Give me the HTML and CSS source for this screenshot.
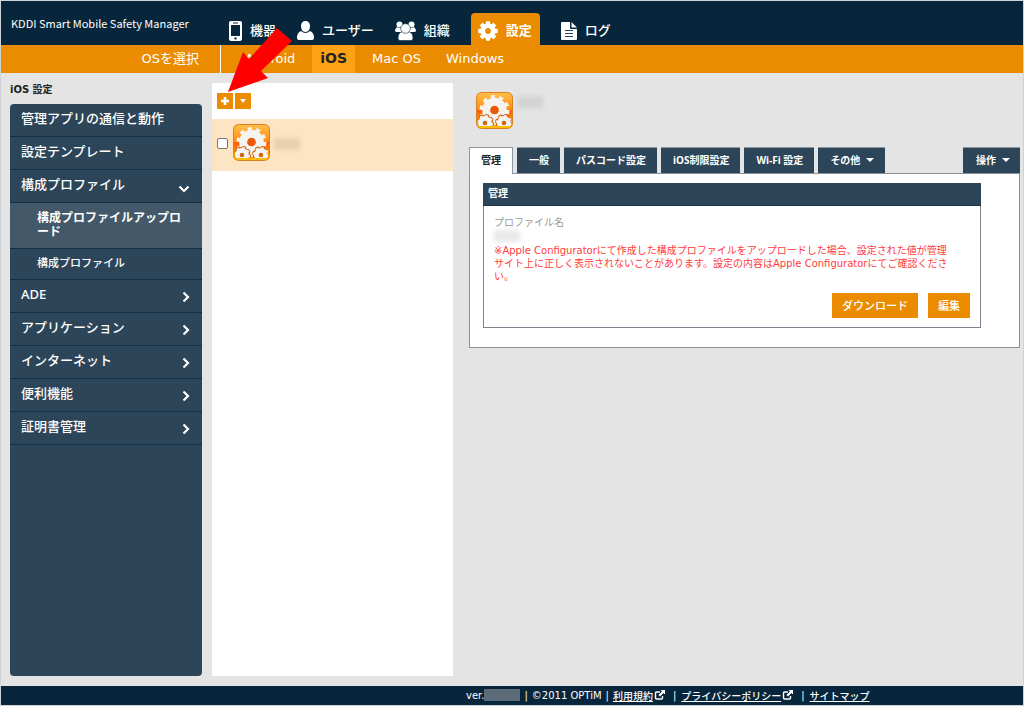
FILE: index.html
```
<!DOCTYPE html>
<html lang="ja">
<head>
<meta charset="utf-8">
<meta name="viewport" content="width=device-width, initial-scale=1">
<title>KDDI Smart Mobile Safety Manager</title>
<link rel="stylesheet" href="styles.css">
</head>
<body>
<svg class="defs" aria-hidden="true">
  <defs>
    <linearGradient id="tile" x1="0" y1="0" x2="0" y2="1">
      <stop offset="0" stop-color="#ffc04a"/>
      <stop offset="0.48" stop-color="#ff8a14"/>
      <stop offset="0.5" stop-color="#fb5a08"/>
      <stop offset="0.72" stop-color="#ff8a00"/>
      <stop offset="1" stop-color="#ffc400"/>
    </linearGradient>
    <clipPath id="tile-clip"><path d="M2 2h33v32H2z"/></clipPath>
    <symbol id="gear" viewBox="-10 -10 20 20">
      <circle r="5.2" fill="none" stroke="currentColor" stroke-width="4.6"/>
      <g fill="currentColor">
        <path id="tooth" d="M-2.4-6.5l.5-3.3h3.8l.5 3.3z"/>
        <use href="#tooth" transform="rotate(45)"/>
        <use href="#tooth" transform="rotate(90)"/>
        <use href="#tooth" transform="rotate(135)"/>
        <use href="#tooth" transform="rotate(180)"/>
        <use href="#tooth" transform="rotate(225)"/>
        <use href="#tooth" transform="rotate(270)"/>
        <use href="#tooth" transform="rotate(315)"/>
      </g>
    </symbol>
    <symbol id="profile" viewBox="0 0 37 37">
      <rect x=".5" y=".5" width="36" height="36" rx="5" fill="url(#tile)" stroke="#d98022"/>
      <g clip-path="url(#tile-clip)">
        <g fill="none" stroke="#f5f3f0">
          <circle cx="18.500" cy="18" r="8.300" stroke-width="8"/>
          <circle cx="18.500" cy="18" r="13" stroke-width="4" stroke-dasharray="4.080 4.090"/>
        </g>
        <circle cx="18.500" cy="18" r="4" fill="#e8590c"/>
        <g fill="#cf6712" stroke="#cf6712">
          <circle cx="9" cy="31" r="7"/>
          <circle cx="9" cy="31" r="8" stroke-width="2" stroke-dasharray="3.800 2.480"/>
          <circle cx="28" cy="31" r="7"/>
          <circle cx="28" cy="31" r="8" stroke-width="2" stroke-dasharray="3.800 2.480"/>
        </g>
        <g fill="none" stroke="#f5f3f0">
          <circle cx="9" cy="31" r="4.600" stroke-width="4.600"/>
          <circle cx="9" cy="31" r="7.200" stroke-width="1.800" stroke-dasharray="2.700 2.950"/>
          <circle cx="28" cy="31" r="4.600" stroke-width="4.600"/>
          <circle cx="28" cy="31" r="7.200" stroke-width="1.800" stroke-dasharray="2.700 2.950"/>
        </g>
      </g>
    </symbol>
    <symbol id="chevron" viewBox="0 0 8 12">
      <path d="M1.500 1.500L6 6l-4.500 4.500" fill="none" stroke="currentColor" stroke-width="2.200"/>
    </symbol>
    <symbol id="external" viewBox="0 0 11 10">
      <path d="M6 2H2.500Q1.500 2 1.500 3v5q0 1 1 1h5q1 0 1-1V6" fill="none" stroke="currentColor" stroke-width="1.400"/>
      <path d="M6.500 0H11v4.500L9.500 3 6 6.500 4.500 5 8 1.500z" fill="currentColor"/>
    </symbol>
  </defs>
</svg>

<div class="app">
  <header class="topbar">
    <div class="brand">KDDI Smart Mobile Safety Manager</div>
    <nav class="topnav" aria-label="メイン">
      <a class="topnav-item" href="#">
        <svg class="icon-phone" viewBox="0 0 13 20"><path fill="#fff" fill-rule="evenodd" d="M2 0h9q2 0 2 2v16q0 2-2 2H2q-2 0-2-2V2q0-2 2-2zM2 4v11h9V4zM4 1.500v1h5v-1zM6.500 16.200a1.200 1.200 0 1 0 .01 0z"/></svg>
        機器
      </a>
      <a class="topnav-item" href="#">
        <svg class="icon-user" viewBox="0 0 17 20"><path fill="#fff" d="M8.500 0C11.500 0 13 2 13 5s-1.500 6-4.500 6S4 8 4 5s1.500-5 4.500-5zM4 10q4.500 4 9 0 4 1.500 4 7 0 2-2 2H2q-2 0-2-2 0-5.500 4-7z"/></svg>
        ユーザー
      </a>
      <a class="topnav-item" href="#">
        <svg class="icon-group" viewBox="0 0 21 20"><g fill="#fff"><circle cx="4.500" cy="3.500" r="3"/><circle cx="16.500" cy="3.500" r="3"/><path d="M2 6q3 2 5 0v5H2q-2 0-2-1.500T2 6zM19 6q-3 2-5 0v5h5q2 0 2-1.500T19 6z"/></g><g fill="#fff" stroke="#07263b" stroke-width=".6"><path d="M6 11h9q3 1.500 3 6 0 2.500-2 2.500H5q-2 0-2-2.500 0-4.500 3-6z"/><circle cx="10.500" cy="7.500" r="4.800"/></g></svg>
        組織
      </a>
      <a class="topnav-item topnav-item-active" href="#" aria-current="page">
        <svg class="icon-gear"><use href="#gear"/></svg>
        設定
      </a>
      <a class="topnav-item" href="#">
        <svg class="icon-log" viewBox="0 0 16 18"><path fill="#fff" d="M1 0h8v6q0 1 1 1h6v10q0 1-1 1H1q-1 0-1-1V1q0-1 1-1zM10.500 0L16 5.500h-5.500z"/><path stroke="#27455c" d="M4 8.500h8M4 11.500h8M4 14.500h8"/></svg>
        ログ
      </a>
    </nav>
  </header>

  <nav class="osbar" aria-label="OSを選択">
    <div class="osbar-label">OSを選択</div>
    <div class="osbar-links">
      <a class="os-link" href="#">Android</a>
      <a class="os-link os-link-active" href="#" aria-current="true">iOS</a>
      <a class="os-link" href="#">Mac OS</a>
      <a class="os-link" href="#">Windows</a>
    </div>
  </nav>

  <div class="workspace">
    <aside class="side">
      <h1 class="side-title">iOS 設定</h1>
      <nav class="menu" aria-label="iOS 設定">
        <a class="menu-item" href="#">管理アプリの通信と動作</a>
        <a class="menu-item" href="#">設定テンプレート</a>
        <a class="menu-item" href="#">構成プロファイル<svg class="chevron chevron-open" viewBox="0 0 12 8"><path d="M1.500 1.500L6 6l4.500-4.500" fill="none" stroke="currentColor" stroke-width="2.200"/></svg></a>
        <a class="menu-sub menu-sub-active" href="#">構成プロファイルアップロード</a>
        <a class="menu-sub" href="#">構成プロファイル</a>
        <a class="menu-item" href="#">ADE<svg class="chevron"><use href="#chevron"/></svg></a>
        <a class="menu-item" href="#">アプリケーション<svg class="chevron"><use href="#chevron"/></svg></a>
        <a class="menu-item" href="#">インターネット<svg class="chevron"><use href="#chevron"/></svg></a>
        <a class="menu-item" href="#">便利機能<svg class="chevron"><use href="#chevron"/></svg></a>
        <a class="menu-item" href="#">証明書管理<svg class="chevron"><use href="#chevron"/></svg></a>
      </nav>
    </aside>

    <section class="list">
      <div class="list-tools">
        <button class="tool" type="button" aria-label="追加"><svg class="tool-icon" viewBox="0 0 8 8"><path fill="#fff" d="M2.700 0h2.600v2.700H8v2.600H5.300V8H2.700V5.300H0V2.700h2.700z"/></svg></button>
        <button class="tool" type="button" aria-label="メニュー"><svg class="tool-icon" viewBox="0 0 8 8"><path fill="#fff" d="M1 2h6L4 6z"/></svg></button>
      </div>
      <label class="list-row">
        <input class="list-check" type="checkbox" aria-label="プロファイルを選択">
        <svg class="profile-icon"><use href="#profile"/></svg>
        <span class="masked masked-row"></span>
      </label>
    </section>

    <main class="detail">
      <div class="detail-head">
        <svg class="profile-icon"><use href="#profile"/></svg>
        <span class="masked masked-title"></span>
      </div>
      <div class="tabs">
        <button class="tab tab-active" type="button">管理</button>
        <button class="tab" type="button">一般</button>
        <button class="tab" type="button">パスコード設定</button>
        <button class="tab" type="button">iOS制限設定</button>
        <button class="tab" type="button">Wi-Fi 設定</button>
        <button class="tab" type="button">その他<span class="caret"></span></button>
        <button class="tab tab-action" type="button">操作<span class="caret"></span></button>
      </div>
      <div class="panel">
        <section class="card">
          <h2 class="card-title">管理</h2>
          <div class="card-body">
            <div class="field-label">プロファイル名</div>
            <div class="masked masked-name"></div>
            <p class="notice">※Apple Configuratorにて作成した構成プロファイルをアップロードした場合、設定された値が管理<br>サイト上に正しく表示されないことがあります。設定の内容はApple Configuratorにてご確認くださ<br>い。</p>
            <div class="actions">
              <button class="action" type="button">ダウンロード</button>
              <button class="action" type="button">編集</button>
            </div>
          </div>
        </section>
      </div>
    </main>
  </div>

  <footer class="footer">
    <span>ver.</span><span class="masked-version"></span>
    <span class="bar">|</span><span>©2011 OPTiM</span><span class="bar">|</span>
    <a class="footer-link" href="#">利用規約</a><svg class="external"><use href="#external"/></svg>
    <span class="bar bar-wide">|</span>
    <a class="footer-link" href="#">プライバシーポリシー</a><svg class="external"><use href="#external"/></svg>
    <span class="bar bar-wide">|</span>
    <a class="footer-link" href="#">サイトマップ</a>
  </footer>

  <svg class="pointer" viewBox="0 0 64 64" aria-hidden="true"><path fill="#f00" d="M0 65L15 25l6 7L49 1l15 13-31 30 7 7z"/></svg>
</div>
</body>
</html>
```
FILE: styles.css
```
* {
  box-sizing: border-box;
}

body {
  margin: 0;
  background: #e4e4e4;
  color: #222;
  font-family: "DejaVu Sans", "Noto Sans CJK JP", sans-serif;
  font-size: 10px;
}

a {
  color: inherit;
  text-decoration: none;
}

button {
  border: 0;
  margin: 0;
  padding: 0;
  color: #fff;
  font-family: "Noto Sans", "Noto Sans CJK JP", sans-serif;
  font-size: 10px;
}

svg {
  flex: none;
}

.defs {
  position: absolute;
  width: 0;
  height: 0;
}

.app {
  position: relative;
  display: flex;
  flex-direction: column;
  min-height: 100vh;
  border: 1px solid #d0d3d5;
}

/* Header */
.topbar {
  display: flex;
  height: 44px;
  background: #07263b;
  color: #fff;
}

.brand {
  flex: none;
  width: 228px;
  padding: 13px 0 0 10px;
  font-family: "Noto Sans CJK JP", sans-serif;
  font-size: 11px;
  font-weight: 400;
  line-height: 18px;
  white-space: nowrap;
}

.topnav {
  display: flex;
  align-items: flex-end;
  gap: 21px;
}

.topnav-item {
  display: flex;
  align-items: center;
  gap: 8px;
  height: 32px;
  padding-top: 4px;
  font-size: 13px;
  font-weight: 500;
  line-height: 20px;
  white-space: nowrap;
}

.topnav-item-active {
  padding-right: 8px;
  padding-left: 7px;
  border-radius: 4px 4px 0 0;
  background: #eb8c00;
  font-weight: 700;
}

.icon-phone {
  width: 13px;
  height: 20px;
}

.icon-user {
  width: 17px;
  height: 20px;
}

.icon-group {
  width: 21px;
  height: 20px;
}

.icon-gear {
  width: 20px;
  height: 20px;
}

.icon-log {
  width: 16px;
  height: 18px;
}

/* OS selector */
.osbar {
  display: flex;
  height: 28px;
  background: #eb8c00;
  color: #fff;
  font-size: 13px;
  line-height: 27px;
}

.osbar-label {
  width: 220px;
  padding-right: 21px;
  border-right: 1px solid #fff;
  text-align: right;
}

.osbar-links {
  display: flex;
  gap: 9px;
  padding-left: 16px;
}

.os-link {
  padding: 0 8px;
}

.os-link-active {
  background: #ffa114;
  color: #222;
  font-size: 14px;
  font-weight: 700;
}

/* Workspace */
.workspace {
  display: flex;
  flex: 1;
  gap: 10px;
  padding: 10px 3px 10px 9px;
}

.side {
  display: flex;
  flex: none;
  flex-direction: column;
  width: 192px;
}

.side-title {
  margin: 0;
  padding-bottom: 7px;
  font-size: 10px;
  font-weight: 700;
  line-height: 14px;
}

.menu {
  flex: 1;
  overflow: hidden;
  border-radius: 4px;
  background: #2d4558;
  color: #fff;
}

.menu-item {
  display: flex;
  align-items: center;
  justify-content: space-between;
  height: 33px;
  padding: 0 12px 5px 11px;
  border-bottom: 1px solid #142f44;
  font-family: "Noto Sans", "Noto Sans CJK JP", sans-serif;
  font-size: 13px;
  font-weight: 500;
}

.menu-sub {
  display: block;
  padding: 8px 16px 8px 27px;
  border-bottom: 1px solid #142f44;
  font-size: 11px;
  font-weight: 500;
  line-height: 14px;
  line-break: anywhere;
}

.menu-sub-active {
  padding-bottom: 9px;
  background: #435969;
  font-size: 12px;
  font-weight: 700;
}

.chevron {
  width: 8px;
  height: 12px;
  margin-top: 6px;
}

.chevron-open {
  width: 12px;
  height: 8px;
  margin-top: 10px;
}

.list {
  flex: none;
  width: 241px;
  background: #fff;
}

.list-tools {
  display: flex;
  gap: 2px;
  height: 36px;
  padding: 10px 5px;
}

.tool {
  display: grid;
  place-items: center;
  width: 16px;
  height: 16px;
  background: #eb8c00;
}

.tool-icon {
  width: 8px;
  height: 8px;
}

.list-row {
  display: flex;
  align-items: flex-start;
  height: 52px;
  padding: 5px;
  background: #fde4c3;
}

.list-check {
  width: 11px;
  height: 11px;
  margin: 14px 5px 0 0;
  border: 1px solid #777;
  border-radius: 2px;
  appearance: none;
  background: #fff;
}

.list-check:checked {
  background: #eb8c00;
}

.profile-icon {
  width: 37px;
  height: 37px;
}

.masked {
  display: block;
  width: 26px;
  height: 12px;
  background: #d3d3d3;
  filter: blur(2px);
}

.masked-row {
  margin: 14px 0 0 4px;
  background: #e8cfb1;
}

.masked-title {
  margin: 4px 0 0 4px;
}

.masked-name {
  background: #e9e9e9;
}

/* Detail */
.detail {
  flex: 1;
  min-width: 0;
  padding-left: 6px;
}

.detail-head {
  display: flex;
  align-items: flex-start;
  height: 64px;
  padding: 9px 7px;
}

.tabs {
  display: flex;
  gap: 4px;
}

.tab {
  display: flex;
  align-items: center;
  height: 26px;
  padding: 0 11px 2px 12px;
  border: 1px solid #8b98a2;
  border-width: 1px 0 0;
  background: #2d4558;
  font-weight: 700;
  white-space: nowrap;
}

.tab-active {
  z-index: 1;
  border-width: 1px 1px 0;
  margin-bottom: -1px;
  padding: 0 11px 3px;
  height: 27px;
  background: #fff;
  color: #222;
}

.tab-action {
  margin-left: auto;
  padding: 0 10px 2px 13px;
}

.caret {
  margin-left: 6px;
  border: 4px solid transparent;
  border-top: 4px solid #fff;
  border-bottom: 0;
}

.panel {
  padding: 9px 38px 19px 13px;
  border: 1px solid #8b8f98;
  background: #fff;
}

.card {
  border: 1px solid #7d828c;
}

.card-title {
  margin: -1px -1px 0;
  padding: 0 5px;
  border-bottom: 1px solid #183447;
  background: #2d4558;
  color: #fff;
  font-size: 10px;
  font-weight: 700;
  line-height: 22px;
}

.card-body {
  padding: 9px 10px;
}

.field-label {
  color: #999;
  line-height: 15px;
}

.notice {
  margin: 2px 0 10px;
  color: #ff3b3b;
  line-height: 13px;
  white-space: nowrap;
}

.actions {
  display: flex;
  justify-content: flex-end;
  gap: 10px;
}

.action {
  height: 25px;
  padding: 0 10px 2px;
  background: #eb8c00;
  font-size: 11px;
  font-weight: 500;
}

/* Footer */
.footer {
  display: flex;
  align-items: center;
  height: 19px;
  padding: 0 0 1px 465px;
  background: #07263b;
  color: #fff;
  font-weight: 500;
  white-space: nowrap;
}

.masked-version {
  width: 36px;
  height: 12px;
  background: #5b6b78;
}

.bar {
  padding: 0 4px;
}

.bar-wide {
  padding-right: 5px;
  padding-left: 8px;
}

.footer-link {
  text-decoration: underline;
}

.external {
  width: 11px;
  height: 10px;
  margin-left: 1px;
}

.pointer {
  position: absolute;
  top: 26px;
  left: 227px;
  width: 64px;
  height: 64px;
  overflow: visible;
}
```
